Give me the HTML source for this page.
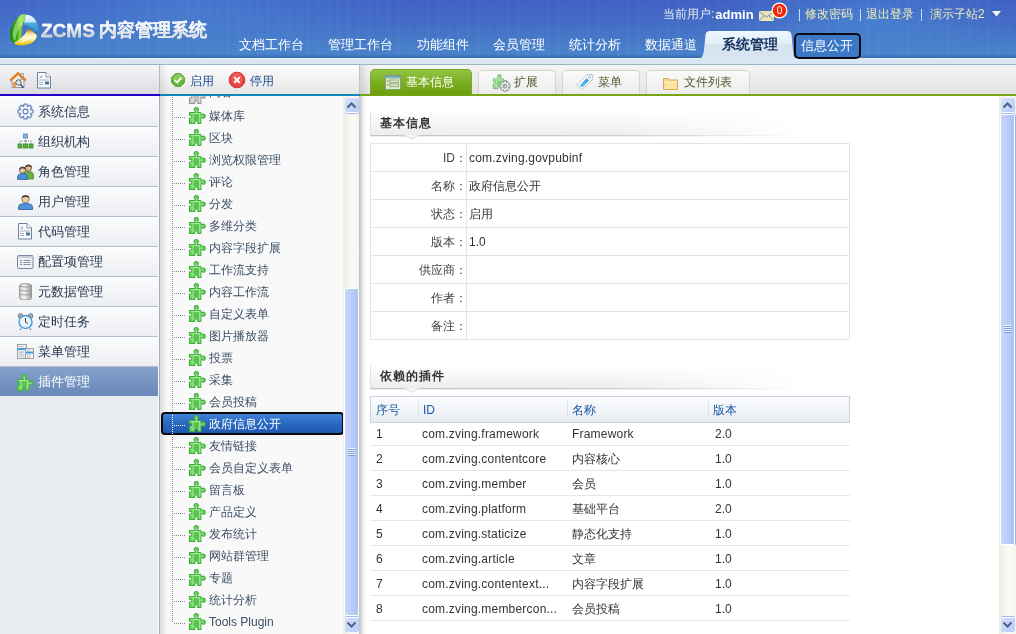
<!DOCTYPE html>
<html><head><meta charset="utf-8">
<style>
*{margin:0;padding:0;box-sizing:border-box}
html,body{will-change:transform;width:1016px;height:634px;overflow:hidden;background:#fff;font-family:"Liberation Sans",sans-serif;font-size:12px;color:#333}
.a{position:absolute}
svg{display:block}
#hdr{left:0;top:0;width:1016px;height:58px;background:linear-gradient(180deg,rgba(0,0,0,0) 93%,rgba(20,50,110,.35) 100%),radial-gradient(ellipse 220px 70px at 190px 12px,rgba(74,140,214,.55),rgba(74,140,214,0)),radial-gradient(ellipse 140px 60px at 870px 20px,rgba(74,144,216,.5),rgba(74,144,216,0)),linear-gradient(180deg,#4060c4 0%,#436cc6 40%,#477ec9 80%,#4a84cb 100%)}
#hdrs{left:0;top:0;width:1016px;height:58px;background:repeating-linear-gradient(90deg,rgba(255,255,255,0) 0px,rgba(255,255,255,0) 7px,rgba(255,255,255,.035) 8px,rgba(255,255,255,0) 10px)}
#hdr2{left:0;top:58px;width:1016px;height:7px;background:linear-gradient(180deg,#e6eef8,#d9e5f2 30%);border-bottom:1px solid #9fb3c7}
.nav{top:37px;font-size:13px;color:#fff;line-height:15px;white-space:nowrap}
.tr{top:7px;font-size:12px;color:#f3ecb5;line-height:14px;white-space:nowrap}
#tb{left:0;top:65px;width:1016px;height:29px;background:linear-gradient(180deg,#f5f5f8,#dcdde1)}
#left{left:0;top:96px;width:159px;height:538px;background:#e9ecf1}
.li{position:absolute;left:0;width:158px;height:30px;background:linear-gradient(180deg,#fbfcfd,#eceef2);border-bottom:1px solid #b4c0d0;font-size:13px;color:#2b3a4f;line-height:29px;padding-left:38px;white-space:nowrap}
.li svg{position:absolute;left:17px;top:6px}
#mid{left:160px;top:96px;width:200px;height:538px;background:#f9f9f9}
.lat{letter-spacing:.2px}
.ti{position:absolute;left:209px;font-size:12px;color:#3c4e66;line-height:14px;white-space:nowrap}
#right{left:360px;top:96px;width:656px;height:538px;background:#fff}
</style></head><body>
<svg width="0" height="0" style="position:absolute">
<defs>
<linearGradient id="pz" x1="0" y1="0" x2="0" y2="1"><stop offset="0" stop-color="#7ad86a"/><stop offset="1" stop-color="#3cae34"/></linearGradient>
<symbol id="puz" viewBox="0 -1 18 18">
<path d="M1.5 4.5H7.5V3.6A2.1 2.1 0 1 1 9.1 3.6V4.5H12.9V7.4H13.4A2 2 0 1 1 13.4 8.9H12.9V15.5H9.8V14.2A1.5 1.5 0 0 0 6.8 14.2V15.5H1.5V10H3.8V7.2H1.5Z" fill="#6ed062" stroke="#40b23a" stroke-width="1.1" stroke-linejoin="round"/>
<path d="M2.6 5.6H11.8V14.4M2.8 11.1H5V14.4M5 6.6V10M8.3 2V5.6M11.8 8.15H14.5" fill="none" stroke="#b8f0b0" stroke-width=".9" opacity=".9"/>
<rect x="5.8" y="6.8" width="5" height="5.2" fill="#54be48" opacity=".75"/>
</symbol>
<symbol id="puzg" viewBox="0 -1 18 18">
<path d="M1.5 4.5H7.5V3.6A2.1 2.1 0 1 1 9.1 3.6V4.5H12.9V7.4H13.4A2 2 0 1 1 13.4 8.9H12.9V15.5H9.8V14.2A1.5 1.5 0 0 0 6.8 14.2V15.5H1.5V10H3.8V7.2H1.5Z" fill="#c8c8c8" stroke="#979797" stroke-width="1.1" stroke-linejoin="round"/>
<path d="M2.6 5.6H11.8V14.4M2.8 11.1H5V14.4M5 6.6V10M8.3 2V5.6M11.8 8.15H14.5" fill="none" stroke="#eee" stroke-width=".9" opacity=".8"/>
<rect x="5.8" y="6.8" width="5" height="5.2" fill="#bbb" opacity=".75"/>
</symbol>
</defs>
</svg>

<!-- HEADER -->
<div id="hdr" class="a"></div>
<div id="hdrs" class="a"></div>
<div id="hdr2" class="a"></div>

<svg class="a" style="left:8px;top:12px" width="32" height="35" viewBox="0 0 32 35">
<defs>
<linearGradient id="lg1" x1="0" y1="0" x2="1" y2="0"><stop offset="0" stop-color="#128a10"/><stop offset=".45" stop-color="#3aa81a"/><stop offset=".6" stop-color="#8ad43a"/><stop offset="1" stop-color="#6cc818"/></linearGradient>
<linearGradient id="lg2" x1="0" y1="0" x2="0" y2="1"><stop offset="0" stop-color="#f0faff"/><stop offset=".35" stop-color="#c8e8f6"/><stop offset=".45" stop-color="#4aaed8"/><stop offset=".8" stop-color="#3598c8"/><stop offset="1" stop-color="#1a5a8c"/></linearGradient>
<linearGradient id="lg3" x1="0" y1="0" x2="0" y2="1"><stop offset="0" stop-color="#b07a08"/><stop offset=".3" stop-color="#f8e8a0"/><stop offset=".55" stop-color="#fffbe0"/><stop offset=".8" stop-color="#f4d030"/><stop offset="1" stop-color="#e8c000"/></linearGradient>
</defs>
<path d="M13.8 2.2L18.2 2.8C17.5 5 16.6 8.3 16.6 8.3C15.5 11 14.3 14.3 14.3 14.3C13.7 17 13.5 21 13.5 24.3L8.3 32C6 31.5 3.5 30 2.5 27.5C1.3 24 1.8 19 3.3 15.5C5 11 8 6 13.8 2.2Z" fill="url(#lg1)"/>
<path d="M13.8 2.2L18.2 2.8C16.5 6 15 10 14.5 14C13 13 11 15 9.5 20C8 24 7.5 27 7 29C4.5 27 4 22 5.5 17C7.5 10 10.5 5 13.8 2.2Z" fill="#c8f0a0" opacity=".55"/>
<path d="M18.2 2.8C20 2.7 23.5 3.5 26 6C28.5 9 30 13 30 16.6C30.2 19 29.6 21 28.7 22C27 19.5 25.5 17.5 24.8 16.6C23 15 20 13.5 16.6 12.7C16 12 16 11 16 11C16.5 8 17.3 5 18.2 2.8Z" fill="url(#lg2)"/>
<path d="M20.4 17.1C22 17.5 23 18 23.7 18.8C26 20.5 28 22 28.7 23.2C29 25 28.2 27 26 29.2C24.5 30.5 22.5 31.6 21 32C18 33 15.5 33.5 13.8 33.4C11 33.3 8.8 33 7.7 32.6L6.1 30.9C8 29.5 10 28.5 11 27.6C12.5 26.5 13.5 25.5 14.3 24.8C15.5 23.5 16.5 22.5 17.7 21C18.5 19.5 19.5 18 20.4 17.1Z" fill="url(#lg3)"/>
<path d="M10 30C15 29.5 20 27 25.5 22.5C24 26 20 29.5 14 31Z" fill="#fff" opacity=".6"/>
</svg>
<div class="a" style="left:41px;top:20px;font-size:19px;font-weight:bold;line-height:22px;color:#eef0f2;background:linear-gradient(180deg,#ffffff 30%,#c8ccd2 70%,#f4f4f4);-webkit-background-clip:text;background-clip:text;-webkit-text-fill-color:transparent;-webkit-text-stroke:.3px rgba(236,240,244,.8)">ZCMS</div>
<div class="a" style="left:99px;top:19px;font-weight:bold;font-size:17.5px;line-height:22px;color:#eef0f2;white-space:nowrap;background:linear-gradient(180deg,#ffffff 35%,#c8d0d8 70%,#eeeeee);-webkit-background-clip:text;background-clip:text;-webkit-text-fill-color:transparent;-webkit-text-stroke:.15px rgba(236,240,244,.7)">内容管理系统</div>

<div class="a nav" style="left:239px">文档工作台</div>
<div class="a nav" style="left:328px">管理工作台</div>
<div class="a nav" style="left:417px">功能组件</div>
<div class="a nav" style="left:493px">会员管理</div>
<div class="a nav" style="left:569px">统计分析</div>
<div class="a nav" style="left:645px">数据通道</div>
<svg class="a" style="left:697px;top:30px" width="100" height="29" viewBox="0 0 100 29">
<defs><linearGradient id="act" x1="0" y1="0" x2="0" y2="1"><stop offset="0" stop-color="#eef7fd"/><stop offset=".45" stop-color="#e2eff9"/><stop offset=".5" stop-color="#d8e5f1"/><stop offset="1" stop-color="#d6e3f0"/></linearGradient></defs>
<path d="M2 28.5C5 28 6 26 7 20L8.5 5C9 2 10 1 13 1H90C93 1 94 2 94.5 5L96 20C97 26 97 28 100 28.5Z" fill="url(#act)"/>
</svg>
<div class="a" style="left:722px;top:37px;font-size:13.5px;font-weight:bold;line-height:15px;color:#15335e;white-space:nowrap">系统管理</div>
<div class="a" style="left:794px;top:33px;width:67px;height:26px;border:2px solid #0a0a14;border-radius:5px;background:#3b78c6"></div>
<div class="a nav" style="left:801px;top:38px">信息公开</div>

<div class="a tr" style="left:663px;color:#e4eaf2">当前用户:<b style="color:#fff;font-size:13px;margin-left:1px;position:relative;top:1px">admin</b></div>
<svg class="a" style="left:759px;top:11px" width="15" height="10" viewBox="0 0 15 10"><rect x="0" y="0" width="15" height="10" fill="#ece6b4"/><path d="M0 .5L7.5 6L15 .5M0 9.5L5.5 4.5M15 9.5L9.5 4.5" fill="none" stroke="#6a88b8" stroke-width=".9"/></svg>
<svg class="a" style="left:770px;top:2px" width="19" height="17" viewBox="0 0 19 17"><circle cx="9.5" cy="8.5" r="7.4" fill="#f02c0c" stroke="#fff6f0" stroke-width="1.3"/><text x="9.5" y="12" font-size="10" fill="#fff" text-anchor="middle" font-family="Liberation Sans">0</text></svg>
<div class="a" style="left:799px;top:9px;width:1px;height:12px;background:#d0dcf0"></div>
<div class="a tr" style="left:805px">修改密码</div>
<div class="a" style="left:860px;top:9px;width:1px;height:12px;background:#d0dcf0"></div>
<div class="a tr" style="left:866px">退出登录</div>
<div class="a" style="left:921px;top:9px;width:1px;height:12px;background:#d0dcf0"></div>
<div class="a tr" style="left:930px;font-size:12px;top:7px">演示子站2</div>
<svg class="a" style="left:992px;top:11px" width="9" height="6" viewBox="0 0 9 6"><path d="M0 0H9L4.5 5.5Z" fill="#f4f4f0"/></svg>

<!-- TOOLBAR -->
<div id="tb" class="a"></div>
<div class="a" style="left:159px;top:65px;width:1px;height:29px;background:#b4b8c0"></div>
<div class="a" style="left:160px;top:65px;width:200px;height:29px;background:linear-gradient(180deg,#fdfdfd,#e6e6e6)"></div>
<div class="a" style="left:160px;top:65px;width:8px;height:29px;background:linear-gradient(90deg,rgba(0,0,0,.08),rgba(0,0,0,0))"></div>
<div class="a" style="left:359px;top:65px;width:1px;height:29px;background:#c4c4c4"></div>
<div class="a" style="left:360px;top:65px;width:656px;height:29px;background:linear-gradient(180deg,#f4f4f4,#e4e4e4)"></div>
<div class="a" style="left:360px;top:65px;width:9px;height:29px;background:linear-gradient(90deg,rgba(0,0,0,.1),rgba(0,0,0,0))"></div>
<div class="a" style="left:0;top:94px;width:160px;height:2px;background:#2600c8"></div>
<div class="a" style="left:160px;top:94px;width:200px;height:2px;background:#0f88b6"></div>
<div class="a" style="left:360px;top:94px;width:656px;height:2px;background:#76a614"></div>

<!-- home icon -->
<svg class="a" style="left:9px;top:72px" width="18" height="17" viewBox="0 0 18 17">
<rect x="12" y="1.5" width="2.5" height="6" fill="#eef" stroke="#8a9ab0" stroke-width=".8"/>
<path d="M3 8V15.5H15V8" fill="#f4f0ea" stroke="#8a9ab0" stroke-width="1"/>
<path d="M1.2 8.6L9 1.3L16.8 8.6" fill="none" stroke="#e07d18" stroke-width="2.4" stroke-linejoin="round"/>
<rect x="4.2" y="10" width="2.6" height="5.5" fill="#f09030"/>
<circle cx="9.5" cy="10.5" r="2.7" fill="#d8eaf2" stroke="#555" stroke-width="1"/>
<path d="M11.5 12.5L14.5 15.8" stroke="#444" stroke-width="1.3"/>
</svg>
<!-- doc icon -->
<svg class="a" style="left:36px;top:72px" width="16" height="17" viewBox="0 0 16 17">
<path d="M1.5 .5H10L14.5 5V16H1.5Z" fill="#f8fafc" stroke="#6e7f96" stroke-width="1"/>
<path d="M10 .5V5H14.5" fill="#fff" stroke="#6e7f96" stroke-width=".8"/>
<path d="M3 6L6 2.5V6Z" fill="#b8b0e8"/>
<path d="M3 8H13M3 10.5H7M3 12.5H7" stroke="#9aaac0" stroke-width=".9"/>
<rect x="9" y="9.5" width="4" height="3" fill="#4a7890"/>
</svg>

<!-- enable / disable -->
<svg class="a" style="left:171px;top:73px" width="14" height="14" viewBox="0 0 16 16">
<path d="M5 .8H11L15.2 5V11L11 15.2H5L.8 11V5Z" fill="#6cba3c" stroke="#4e8a30" stroke-width="1.1"/>
<path d="M5 1.5H11L14.5 5V8H1.5V5Z" fill="#9ad870" opacity=".55"/>
<path d="M4.3 8.2L7 10.8L11.8 5.4" fill="none" stroke="#fff" stroke-width="2.2"/>
</svg>
<div class="a" style="left:190px;top:74px;font-size:12px;line-height:14px;color:#174a8c;white-space:nowrap">启用</div>
<svg class="a" style="left:228px;top:71px" width="18" height="18" viewBox="0 0 18 18">
<circle cx="9" cy="9" r="7.8" fill="#ea4444" stroke="#c83030" stroke-width="1"/>
<circle cx="9" cy="7" r="5.5" fill="#ff8080" opacity=".35"/>
<path d="M6.2 6.2L11.8 11.8M11.8 6.2L6.2 11.8" stroke="#fff" stroke-width="1.9"/>
</svg>
<div class="a" style="left:250px;top:74px;font-size:12px;line-height:14px;color:#174a8c;white-space:nowrap">停用</div>

<!-- tabs -->
<div class="a" style="left:370px;top:69px;width:102px;height:26px;border-radius:5px 5px 0 0;background:linear-gradient(180deg,#92c444,#78aa1c 60%,#6c9e0e);border:1px solid #78aa20;border-bottom:0"></div>
<svg class="a" style="left:385px;top:75px" width="16" height="15" viewBox="0 0 16 15">
<rect x=".5" y=".5" width="15" height="14" fill="#e2eec4" stroke="#7e9e86" stroke-width="1"/>
<rect x="1" y="1" width="14" height="2.6" fill="#8cc0b4"/>
<rect x="1" y="1" width="14" height=".8" fill="#5e9ec0"/>
<rect x="4.8" y="5" width="8.6" height="2.6" fill="none" stroke="#94aa8c" stroke-width="1"/>
<rect x="4.8" y="9" width="8.6" height="2.6" fill="none" stroke="#94aa8c" stroke-width="1"/>
<rect x="2" y="5" width="1.6" height="1.6" fill="#94aa8c"/><rect x="2" y="9" width="1.6" height="1.6" fill="#94aa8c"/>
</svg>
<div class="a" style="left:406px;top:75px;font-size:12px;line-height:14px;color:#fff;white-space:nowrap">基本信息</div>

<div class="a" style="left:478px;top:70px;width:78px;height:24px;border-radius:5px 5px 0 0;background:linear-gradient(180deg,#fafafa,#ececec);border:1px solid #d2d9bd;border-bottom:0"></div>
<svg class="a" style="left:492px;top:73px" width="20" height="20" viewBox="0 0 20 20">
<use href="#puz" x="0" y="1" width="16" height="16" opacity=".72"/>
<path d="M18.17 12.04 L18.17 14.36 L16.51 14.90 L16.68 14.48 L17.48 16.04 L15.84 17.68 L14.28 16.88 L14.70 16.71 L14.16 18.37 L11.84 18.37 L11.30 16.71 L11.72 16.88 L10.16 17.68 L8.52 16.04 L9.32 14.48 L9.49 14.90 L7.83 14.36 L7.83 12.04 L9.49 11.50 L9.32 11.92 L8.52 10.36 L10.16 8.72 L11.72 9.52 L11.30 9.69 L11.84 8.03 L14.16 8.03 L14.70 9.69 L14.28 9.52 L15.84 8.72 L17.48 10.36 L16.68 11.92 L16.51 11.50Z" fill="#ececec" stroke="#8c8c8c" stroke-width=".9"/>
<circle cx="13" cy="13.2" r="1.9" fill="#fff" stroke="#777" stroke-width=".9"/>
<circle cx="12.6" cy="13.2" r=".9" fill="#5cc050"/>
</svg>
<div class="a" style="left:514px;top:75px;font-size:12px;line-height:14px;color:#4e5a30;white-space:nowrap">扩展</div>

<div class="a" style="left:562px;top:70px;width:78px;height:24px;border-radius:5px 5px 0 0;background:linear-gradient(180deg,#fafafa,#ececec);border:1px solid #d2d9bd;border-bottom:0"></div>
<svg class="a" style="left:570px;top:70px" width="30" height="24" viewBox="0 0 30 24">
<defs><linearGradient id="tagb" x1="0" y1="1" x2="1" y2="0"><stop offset="0" stop-color="#5cc8f4"/><stop offset="1" stop-color="#3a98d8"/></linearGradient></defs>
<path d="M7.2 14.8L17.2 4.5H22.6V9.6L11.8 19.6Z" fill="#fbfcfd" stroke="#98a6b4" stroke-width="1" stroke-dasharray="1.2 .8" stroke-linejoin="round"/>
<path d="M9.6 15.4L16.6 8.2L19.2 10.4L12.2 17.6Z" fill="url(#tagb)"/>
<circle cx="19.5" cy="7.4" r="1.3" fill="#fff" stroke="#a0aab4" stroke-width=".8"/>
</svg>
<div class="a" style="left:598px;top:75px;font-size:12px;line-height:14px;color:#4e5a30;white-space:nowrap">菜单</div>

<div class="a" style="left:646px;top:70px;width:104px;height:24px;border-radius:5px 5px 0 0;background:linear-gradient(180deg,#fafafa,#ececec);border:1px solid #d2d9bd;border-bottom:0"></div>
<svg class="a" style="left:663px;top:77px" width="15" height="13" viewBox="0 0 15 13">
<path d="M.5 1.5H5.5L7 3H14.5V12.5H.5Z" fill="#f4d890" stroke="#dca860" stroke-width="1"/>
<path d="M1.2 5H13.8V12H1.2Z" fill="#fae69a"/>
<path d="M1.2 5H13.8" stroke="#fff6d0" stroke-width="1"/>
</svg>
<div class="a" style="left:684px;top:75px;font-size:12px;line-height:14px;color:#4e5a30;white-space:nowrap">文件列表</div>

<!-- LEFT NAV -->
<div id="left" class="a"></div>
<div class="a" style="left:0;top:96px;width:158px;height:1px;background:#fbfcfd"></div>
<div class="a" style="left:158px;top:96px;width:1px;height:538px;background:#f6f8fc"></div><div class="a" style="left:159px;top:96px;width:1px;height:538px;background:#a6aeba"></div>
<div class="li" style="top:97px"><svg width="17" height="17" viewBox="0 0 17 17"><path d="M6.99 1.05 L10.01 1.05 L10.40 3.45 L10.73 3.58 L12.70 2.17 L14.83 4.30 L13.42 6.27 L13.55 6.60 L15.95 6.99 L15.95 10.01 L13.55 10.40 L13.42 10.73 L14.83 12.70 L12.70 14.83 L10.73 13.42 L10.40 13.55 L10.01 15.95 L6.99 15.95 L6.60 13.55 L6.27 13.42 L4.30 14.83 L2.17 12.70 L3.58 10.73 L3.45 10.40 L1.05 10.01 L1.05 6.99 L3.45 6.60 L3.58 6.27 L2.17 4.30 L4.30 2.17 L6.27 3.58 L6.60 3.45Z" fill="#f2f6fb" stroke="#5f84b8" stroke-width="1.2" stroke-linejoin="round"/><circle cx="8.5" cy="8.5" r="2.4" fill="#fff" stroke="#5f84b8" stroke-width="1.2"/></svg>系统信息</div>
<div class="li" style="top:127px"><svg width="17" height="17" viewBox="0 0 17 17"><rect x="6.5" y="1" width="4" height="4" fill="#8ab4e8" stroke="#5a84b8" stroke-width=".8"/><path d="M8.5 5V8M3 8H14M3 8V11M8.5 8V11M14 8V11" stroke="#888" stroke-width="1" fill="none" stroke-dasharray="1 1"/><rect x="1" y="11" width="4" height="4" fill="#5cb040" stroke="#3a8a28" stroke-width=".8"/><rect x="6.5" y="11" width="4" height="4" fill="#5cb040" stroke="#3a8a28" stroke-width=".8"/><rect x="12" y="11" width="4" height="4" fill="#5cb040" stroke="#3a8a28" stroke-width=".8"/></svg>组织机构</div>
<div class="li" style="top:157px"><svg width="17" height="17" viewBox="0 0 17 17"><circle cx="11.5" cy="5" r="3.2" fill="#e8b890" stroke="#333" stroke-width=".6"/><path d="M8.3 4.2C8.5 1.5 14.5 1.2 14.8 4.5L14 4C12.5 3 10 3 9 4.2Z" fill="#2a2a2a"/><path d="M6.5 16V12C6.5 9.5 9 8.5 11.5 8.5C14 8.5 16.5 9.5 16.5 12V16Z" fill="#6ab04a" stroke="#3a7a2a" stroke-width=".7"/><circle cx="5.5" cy="7" r="3.2" fill="#f0c8a0" stroke="#333" stroke-width=".6"/><path d="M2.3 6.4C2.5 3.5 8.5 3.3 8.8 6.5L8 6C6.5 5 4 5 3 6.2Z" fill="#1a1a1a"/><path d="M.5 16.5V14C.5 11.5 3 10.5 5.5 10.5C8 10.5 10.5 11.5 10.5 14V16.5Z" fill="#4a90d8" stroke="#2a5a98" stroke-width=".7"/></svg>角色管理</div>
<div class="li" style="top:187px"><svg width="17" height="17" viewBox="0 0 17 17"><circle cx="8.5" cy="6" r="3.8" fill="#f0c8a0" stroke="#555" stroke-width=".6"/><path d="M4.6 5.6C4.5 1.5 12.5 1.2 12.5 5.6L11.5 4.6C10 3.6 7 3.6 5.6 4.6Z" fill="#222"/><path d="M1.5 16.5V14C1.5 11.5 4.5 10.5 8.5 10.5C12.5 10.5 15.5 11.5 15.5 14V16.5Z" fill="#4c94dc" stroke="#2a5a98" stroke-width=".8"/></svg>用户管理</div>
<div class="li" style="top:217px"><svg width="16" height="17" viewBox="0 0 16 17"><path d="M1.5 .5H10L14.5 5V16H1.5Z" fill="#f8fafc" stroke="#6e7f96" stroke-width="1"/><path d="M10 .5V5H14.5" fill="#fff" stroke="#6e7f96" stroke-width=".8"/><path d="M3 6L6 2.5V6Z" fill="#b8b0e8"/><path d="M3 8H13M3 10.5H7M3 12.5H7" stroke="#9aaac0" stroke-width=".9"/><rect x="9" y="9.5" width="4" height="3" fill="#4a7890"/></svg>代码管理</div>
<div class="li" style="top:247px"><svg width="17" height="17" viewBox="0 0 17 17"><rect x=".5" y="2.5" width="15.5" height="13" rx="1" fill="#f0f2f6" stroke="#7a8aa0" stroke-width="1"/><rect x="1" y="3" width="14.5" height="2" fill="#c8d0dc"/><path d="M3 7.5H5M3 9.5H5M3 11.5H5M6.5 7.5H13.5M6.5 9.5H13.5M6.5 11.5H13.5" stroke="#8a96a8" stroke-width="1"/></svg>配置项管理</div>
<div class="li" style="top:277px"><svg width="17" height="17" viewBox="0 0 17 17"><defs><linearGradient id="dbg" x1="0" x2="1"><stop offset="0" stop-color="#c8c8c8"/><stop offset=".4" stop-color="#f4f4f4"/><stop offset="1" stop-color="#9a9a9a"/></linearGradient></defs><path d="M2.5 2.5C2.5 0 14.5 0 14.5 2.5V15C14.5 17.5 2.5 17.5 2.5 15Z" fill="url(#dbg)" stroke="#8a8a8a" stroke-width=".8"/><path d="M2.5 6.5C2.5 8.5 14.5 8.5 14.5 6.5M2.5 10.5C2.5 12.5 14.5 12.5 14.5 10.5M2.5 2.5C2.5 4.5 14.5 4.5 14.5 2.5" fill="none" stroke="#8a8a8a" stroke-width=".8"/></svg>元数据管理</div>
<div class="li" style="top:307px"><svg width="17" height="17" viewBox="0 0 17 17"><circle cx="3.5" cy="3" r="2.5" fill="#a0a8b4" stroke="#6a7280" stroke-width=".6"/><circle cx="13.5" cy="3" r="2.5" fill="#a0a8b4" stroke="#6a7280" stroke-width=".6"/><circle cx="8.5" cy="9" r="6.5" fill="#eaf4fc" stroke="#4a9ad8" stroke-width="1.4"/><path d="M8.5 5V9.2L11 10.5" fill="none" stroke="#444" stroke-width="1"/><path d="M4 15.5L3 17M13 15.5L14 17" stroke="#6a7280" stroke-width="1.2"/></svg>定时任务</div>
<div class="li" style="top:337px"><svg width="17" height="17" viewBox="0 0 17 17"><rect x=".5" y="1.5" width="9" height="14" fill="#eceef0" stroke="#8a8e94" stroke-width=".8"/><rect x="1" y="5" width="8" height="2" fill="#3a9ae0"/><path d="M2 3.5H6M2 9H7M2 11H6M2 13H7" stroke="#a0a4aa" stroke-width=".7"/><rect x="8.5" y="5.5" width="8" height="10" fill="#f2f4f6" stroke="#8a8e94" stroke-width=".8"/><rect x="9" y="8.5" width="7" height="2" fill="#3a9ae0"/><path d="M10 7H13M10 12H14M10 14H13" stroke="#a0a4aa" stroke-width=".7"/></svg>菜单管理</div>
<div class="li" style="top:367px;height:29px;line-height:30px;background:linear-gradient(180deg,#84a2cc,#6a88b8);border-bottom:0;color:#fff"><svg style="left:16px;top:7px" width="18" height="18" viewBox="0 0 18 18"><use href="#puz" width="18" height="18"/></svg>插件管理</div>

<!-- TREE -->
<div id="mid" class="a"></div>
<div class="a" style="left:160px;top:96px;width:7px;height:538px;background:linear-gradient(90deg,#dcdcdc,rgba(249,249,249,0))"></div>
<div class="a" style="left:160px;top:96px;width:184px;height:538px;overflow:hidden">
<div class="a" style="left:12px;top:-9px;width:1px;height:535px;background:repeating-linear-gradient(180deg,#8a8a8a 0,#8a8a8a 1px,transparent 1px,transparent 2px)"></div>
<svg class="a" style="left:28px;top:-9px" width="18" height="18" viewBox="0 0 18 18"><use href="#puzg" width="18" height="18"/></svg>
<div class="a" style="left:49px;top:-11px;font-size:12px;line-height:14px;color:#3c4e66">内容</div>
<div class="a" style="left:14px;top:21px;width:11px;height:1px;background:repeating-linear-gradient(90deg,#8a8a8a 0,#8a8a8a 1px,transparent 1px,transparent 2px)"></div>
<svg class="a" style="left:28px;top:11px" width="18" height="18" viewBox="0 0 18 18"><use href="#puz" width="18" height="18"/></svg>
<div class="a" style="left:49px;top:13px;font-size:12px;line-height:14px;color:#3c4e66;white-space:nowrap">媒体库</div>
<div class="a" style="left:14px;top:43px;width:11px;height:1px;background:repeating-linear-gradient(90deg,#8a8a8a 0,#8a8a8a 1px,transparent 1px,transparent 2px)"></div>
<svg class="a" style="left:28px;top:33px" width="18" height="18" viewBox="0 0 18 18"><use href="#puz" width="18" height="18"/></svg>
<div class="a" style="left:49px;top:35px;font-size:12px;line-height:14px;color:#3c4e66;white-space:nowrap">区块</div>
<div class="a" style="left:14px;top:65px;width:11px;height:1px;background:repeating-linear-gradient(90deg,#8a8a8a 0,#8a8a8a 1px,transparent 1px,transparent 2px)"></div>
<svg class="a" style="left:28px;top:55px" width="18" height="18" viewBox="0 0 18 18"><use href="#puz" width="18" height="18"/></svg>
<div class="a" style="left:49px;top:57px;font-size:12px;line-height:14px;color:#3c4e66;white-space:nowrap">浏览权限管理</div>
<div class="a" style="left:14px;top:87px;width:11px;height:1px;background:repeating-linear-gradient(90deg,#8a8a8a 0,#8a8a8a 1px,transparent 1px,transparent 2px)"></div>
<svg class="a" style="left:28px;top:77px" width="18" height="18" viewBox="0 0 18 18"><use href="#puz" width="18" height="18"/></svg>
<div class="a" style="left:49px;top:79px;font-size:12px;line-height:14px;color:#3c4e66;white-space:nowrap">评论</div>
<div class="a" style="left:14px;top:109px;width:11px;height:1px;background:repeating-linear-gradient(90deg,#8a8a8a 0,#8a8a8a 1px,transparent 1px,transparent 2px)"></div>
<svg class="a" style="left:28px;top:99px" width="18" height="18" viewBox="0 0 18 18"><use href="#puz" width="18" height="18"/></svg>
<div class="a" style="left:49px;top:101px;font-size:12px;line-height:14px;color:#3c4e66;white-space:nowrap">分发</div>
<div class="a" style="left:14px;top:131px;width:11px;height:1px;background:repeating-linear-gradient(90deg,#8a8a8a 0,#8a8a8a 1px,transparent 1px,transparent 2px)"></div>
<svg class="a" style="left:28px;top:121px" width="18" height="18" viewBox="0 0 18 18"><use href="#puz" width="18" height="18"/></svg>
<div class="a" style="left:49px;top:123px;font-size:12px;line-height:14px;color:#3c4e66;white-space:nowrap">多维分类</div>
<div class="a" style="left:14px;top:153px;width:11px;height:1px;background:repeating-linear-gradient(90deg,#8a8a8a 0,#8a8a8a 1px,transparent 1px,transparent 2px)"></div>
<svg class="a" style="left:28px;top:143px" width="18" height="18" viewBox="0 0 18 18"><use href="#puz" width="18" height="18"/></svg>
<div class="a" style="left:49px;top:145px;font-size:12px;line-height:14px;color:#3c4e66;white-space:nowrap">内容字段扩展</div>
<div class="a" style="left:14px;top:175px;width:11px;height:1px;background:repeating-linear-gradient(90deg,#8a8a8a 0,#8a8a8a 1px,transparent 1px,transparent 2px)"></div>
<svg class="a" style="left:28px;top:165px" width="18" height="18" viewBox="0 0 18 18"><use href="#puz" width="18" height="18"/></svg>
<div class="a" style="left:49px;top:167px;font-size:12px;line-height:14px;color:#3c4e66;white-space:nowrap">工作流支持</div>
<div class="a" style="left:14px;top:197px;width:11px;height:1px;background:repeating-linear-gradient(90deg,#8a8a8a 0,#8a8a8a 1px,transparent 1px,transparent 2px)"></div>
<svg class="a" style="left:28px;top:187px" width="18" height="18" viewBox="0 0 18 18"><use href="#puz" width="18" height="18"/></svg>
<div class="a" style="left:49px;top:189px;font-size:12px;line-height:14px;color:#3c4e66;white-space:nowrap">内容工作流</div>
<div class="a" style="left:14px;top:219px;width:11px;height:1px;background:repeating-linear-gradient(90deg,#8a8a8a 0,#8a8a8a 1px,transparent 1px,transparent 2px)"></div>
<svg class="a" style="left:28px;top:209px" width="18" height="18" viewBox="0 0 18 18"><use href="#puz" width="18" height="18"/></svg>
<div class="a" style="left:49px;top:211px;font-size:12px;line-height:14px;color:#3c4e66;white-space:nowrap">自定义表单</div>
<div class="a" style="left:14px;top:241px;width:11px;height:1px;background:repeating-linear-gradient(90deg,#8a8a8a 0,#8a8a8a 1px,transparent 1px,transparent 2px)"></div>
<svg class="a" style="left:28px;top:231px" width="18" height="18" viewBox="0 0 18 18"><use href="#puz" width="18" height="18"/></svg>
<div class="a" style="left:49px;top:233px;font-size:12px;line-height:14px;color:#3c4e66;white-space:nowrap">图片播放器</div>
<div class="a" style="left:14px;top:263px;width:11px;height:1px;background:repeating-linear-gradient(90deg,#8a8a8a 0,#8a8a8a 1px,transparent 1px,transparent 2px)"></div>
<svg class="a" style="left:28px;top:253px" width="18" height="18" viewBox="0 0 18 18"><use href="#puz" width="18" height="18"/></svg>
<div class="a" style="left:49px;top:255px;font-size:12px;line-height:14px;color:#3c4e66;white-space:nowrap">投票</div>
<div class="a" style="left:14px;top:285px;width:11px;height:1px;background:repeating-linear-gradient(90deg,#8a8a8a 0,#8a8a8a 1px,transparent 1px,transparent 2px)"></div>
<svg class="a" style="left:28px;top:275px" width="18" height="18" viewBox="0 0 18 18"><use href="#puz" width="18" height="18"/></svg>
<div class="a" style="left:49px;top:277px;font-size:12px;line-height:14px;color:#3c4e66;white-space:nowrap">采集</div>
<div class="a" style="left:14px;top:307px;width:11px;height:1px;background:repeating-linear-gradient(90deg,#8a8a8a 0,#8a8a8a 1px,transparent 1px,transparent 2px)"></div>
<svg class="a" style="left:28px;top:297px" width="18" height="18" viewBox="0 0 18 18"><use href="#puz" width="18" height="18"/></svg>
<div class="a" style="left:49px;top:299px;font-size:12px;line-height:14px;color:#3c4e66;white-space:nowrap">会员投稿</div>
<div class="a" style="left:14px;top:329px;width:11px;height:1px;background:repeating-linear-gradient(90deg,#8a8a8a 0,#8a8a8a 1px,transparent 1px,transparent 2px)"></div>
<div class="a" style="left:1px;top:316px;width:183px;height:23px;border:2px solid #0a0a10;border-radius:4px;background:linear-gradient(180deg,#3f82d8,#2a68c0 50%,#1f5ab0)"></div>
<div class="a" style="left:14px;top:329px;width:11px;height:1px;background:repeating-linear-gradient(90deg,#fff 0,#fff 1px,transparent 1px,transparent 2px)"></div>
<div class="a" style="left:12px;top:319px;width:1px;height:21px;background:repeating-linear-gradient(180deg,#fff 0,#fff 1px,transparent 1px,transparent 2px)"></div>
<svg class="a" style="left:28px;top:319px" width="18" height="18" viewBox="0 0 18 18"><use href="#puz" width="18" height="18"/></svg>
<div class="a" style="left:49px;top:321px;font-size:12px;line-height:14px;color:#fff;white-space:nowrap">政府信息公开</div>
<div class="a" style="left:14px;top:351px;width:11px;height:1px;background:repeating-linear-gradient(90deg,#8a8a8a 0,#8a8a8a 1px,transparent 1px,transparent 2px)"></div>
<svg class="a" style="left:28px;top:341px" width="18" height="18" viewBox="0 0 18 18"><use href="#puz" width="18" height="18"/></svg>
<div class="a" style="left:49px;top:343px;font-size:12px;line-height:14px;color:#3c4e66;white-space:nowrap">友情链接</div>
<div class="a" style="left:14px;top:373px;width:11px;height:1px;background:repeating-linear-gradient(90deg,#8a8a8a 0,#8a8a8a 1px,transparent 1px,transparent 2px)"></div>
<svg class="a" style="left:28px;top:363px" width="18" height="18" viewBox="0 0 18 18"><use href="#puz" width="18" height="18"/></svg>
<div class="a" style="left:49px;top:365px;font-size:12px;line-height:14px;color:#3c4e66;white-space:nowrap">会员自定义表单</div>
<div class="a" style="left:14px;top:395px;width:11px;height:1px;background:repeating-linear-gradient(90deg,#8a8a8a 0,#8a8a8a 1px,transparent 1px,transparent 2px)"></div>
<svg class="a" style="left:28px;top:385px" width="18" height="18" viewBox="0 0 18 18"><use href="#puz" width="18" height="18"/></svg>
<div class="a" style="left:49px;top:387px;font-size:12px;line-height:14px;color:#3c4e66;white-space:nowrap">留言板</div>
<div class="a" style="left:14px;top:417px;width:11px;height:1px;background:repeating-linear-gradient(90deg,#8a8a8a 0,#8a8a8a 1px,transparent 1px,transparent 2px)"></div>
<svg class="a" style="left:28px;top:407px" width="18" height="18" viewBox="0 0 18 18"><use href="#puz" width="18" height="18"/></svg>
<div class="a" style="left:49px;top:409px;font-size:12px;line-height:14px;color:#3c4e66;white-space:nowrap">产品定义</div>
<div class="a" style="left:14px;top:439px;width:11px;height:1px;background:repeating-linear-gradient(90deg,#8a8a8a 0,#8a8a8a 1px,transparent 1px,transparent 2px)"></div>
<svg class="a" style="left:28px;top:429px" width="18" height="18" viewBox="0 0 18 18"><use href="#puz" width="18" height="18"/></svg>
<div class="a" style="left:49px;top:431px;font-size:12px;line-height:14px;color:#3c4e66;white-space:nowrap">发布统计</div>
<div class="a" style="left:14px;top:461px;width:11px;height:1px;background:repeating-linear-gradient(90deg,#8a8a8a 0,#8a8a8a 1px,transparent 1px,transparent 2px)"></div>
<svg class="a" style="left:28px;top:451px" width="18" height="18" viewBox="0 0 18 18"><use href="#puz" width="18" height="18"/></svg>
<div class="a" style="left:49px;top:453px;font-size:12px;line-height:14px;color:#3c4e66;white-space:nowrap">网站群管理</div>
<div class="a" style="left:14px;top:483px;width:11px;height:1px;background:repeating-linear-gradient(90deg,#8a8a8a 0,#8a8a8a 1px,transparent 1px,transparent 2px)"></div>
<svg class="a" style="left:28px;top:473px" width="18" height="18" viewBox="0 0 18 18"><use href="#puz" width="18" height="18"/></svg>
<div class="a" style="left:49px;top:475px;font-size:12px;line-height:14px;color:#3c4e66;white-space:nowrap">专题</div>
<div class="a" style="left:14px;top:505px;width:11px;height:1px;background:repeating-linear-gradient(90deg,#8a8a8a 0,#8a8a8a 1px,transparent 1px,transparent 2px)"></div>
<svg class="a" style="left:28px;top:495px" width="18" height="18" viewBox="0 0 18 18"><use href="#puz" width="18" height="18"/></svg>
<div class="a" style="left:49px;top:497px;font-size:12px;line-height:14px;color:#3c4e66;white-space:nowrap">统计分析</div>
<div class="a" style="left:14px;top:527px;width:11px;height:1px;background:repeating-linear-gradient(90deg,#8a8a8a 0,#8a8a8a 1px,transparent 1px,transparent 2px)"></div>
<svg class="a" style="left:28px;top:517px" width="18" height="18" viewBox="0 0 18 18"><use href="#puz" width="18" height="18"/></svg>
<div class="a" style="left:49px;top:519px;font-size:12px;line-height:14px;color:#3c4e66;white-space:nowrap">Tools Plugin</div>
</div>
<div class="a" style="left:343px;top:96px;width:17px;height:538px;background:linear-gradient(90deg,#eeede6,#fbfbf6 60%,#f4f3ee)"></div>
<div class="a" style="left:345px;top:98px;width:14px;height:14px;border-radius:2px;background:linear-gradient(135deg,#d4e0fc,#b8ccfa);box-shadow:0 1px 0 #fff,0 2px 0 #a4bce8"></div>
<svg class="a" style="left:346px;top:101px" width="11" height="9" viewBox="0 0 11 9"><path d="M1.5 6.5L5.5 2.5L9.5 6.5" fill="none" stroke="#4d6185" stroke-width="2"/></svg>
<div class="a" style="left:344px;top:288px;width:15px;height:328px;border-radius:2px;background:linear-gradient(90deg,#c8d6fc,#b8ccf8 60%,#a8c0f4);border:1px solid #fff;box-shadow:1px 0 0 #9ab4e8"></div>
<svg class="a" style="left:347px;top:448px" width="9" height="8" viewBox="0 0 9 8"><path d="M1 .5H8M1 2.5H8M1 4.5H8M1 6.5H8" stroke="#f4f6ff" stroke-width="1"/><path d="M1 1.5H8M1 3.5H8M1 5.5H8M1 7.5H8" stroke="#7e9ad6" stroke-width="1"/></svg>
<div class="a" style="left:345px;top:618px;width:14px;height:14px;border-radius:2px;background:linear-gradient(135deg,#d4e0fc,#b8ccfa);box-shadow:0 -1px 0 #fff,0 -2px 0 #a4bce8"></div>
<svg class="a" style="left:346px;top:620px" width="11" height="9" viewBox="0 0 11 9"><path d="M1.5 2.5L5.5 6.5L9.5 2.5" fill="none" stroke="#4d6185" stroke-width="2"/></svg>
<div class="a" style="left:359px;top:96px;width:1px;height:538px;background:#c8c8c8"></div>

<!-- RIGHT CONTENT -->
<div id="right" class="a"></div>
<div class="a" style="left:360px;top:96px;width:6px;height:538px;background:linear-gradient(90deg,#c8c8c8,#e8e8e8 40%,rgba(255,255,255,0))"></div>
<!-- section 1 header -->
<div class="a" style="left:370px;top:111px;width:430px;height:25px;background:linear-gradient(90deg,rgba(255,255,255,0) 0%,rgba(255,255,255,0) 55%,#fff 100%),linear-gradient(180deg,#ffffff,#ececec);border-left:1px solid #e2e2e2;border-radius:3px 0 0 0"></div>
<div class="a" style="left:370px;top:135px;width:430px;height:1px;background:linear-gradient(90deg,#c4c4c4,#cccccc 55%,rgba(255,255,255,0))"></div>
<div class="a" style="left:370px;top:136px;width:430px;height:1px;background:linear-gradient(90deg,#ececec,#f0f0f0 55%,rgba(255,255,255,0))"></div>
<svg class="a" style="left:403px;top:135px" width="17" height="6" viewBox="0 0 17 6"><path d="M0 0L8.5 5L17 0Z" fill="#e4e4e4"/><path d="M2.5 0L8.5 3.6L14.5 0Z" fill="#f4f4f4"/></svg>
<div class="a" style="left:380px;top:116px;font-size:12px;font-weight:bold;line-height:14px;color:#333;letter-spacing:1px">基本信息</div>
<div class="a" style="left:370px;top:143px;width:480px;height:197px;border:1px solid #e4e4e4"></div>
<div class="a" style="left:466px;top:143px;width:1px;height:197px;background:#e4e4e4"></div>
<div class="a" style="left:373px;top:151px;width:94px;text-align:right;font-size:12px;line-height:14px;color:#444;white-space:nowrap">ID：</div>
<div class="a" style="left:469px;top:151px;font-size:12px;line-height:14px;color:#333;white-space:nowrap;letter-spacing:.2px">com.zving.govpubinf</div>
<div class="a" style="left:370px;top:171px;width:480px;height:1px;background:#e4e4e4"></div>
<div class="a" style="left:373px;top:179px;width:94px;text-align:right;font-size:12px;line-height:14px;color:#444;white-space:nowrap">名称：</div>
<div class="a" style="left:469px;top:179px;font-size:12px;line-height:14px;color:#333;white-space:nowrap">政府信息公开</div>
<div class="a" style="left:370px;top:199px;width:480px;height:1px;background:#e4e4e4"></div>
<div class="a" style="left:373px;top:207px;width:94px;text-align:right;font-size:12px;line-height:14px;color:#444;white-space:nowrap">状态：</div>
<div class="a" style="left:469px;top:207px;font-size:12px;line-height:14px;color:#333;white-space:nowrap">启用</div>
<div class="a" style="left:370px;top:227px;width:480px;height:1px;background:#e4e4e4"></div>
<div class="a" style="left:373px;top:235px;width:94px;text-align:right;font-size:12px;line-height:14px;color:#444;white-space:nowrap">版本：</div>
<div class="a" style="left:469px;top:235px;font-size:12px;line-height:14px;color:#333;white-space:nowrap">1.0</div>
<div class="a" style="left:370px;top:255px;width:480px;height:1px;background:#e4e4e4"></div>
<div class="a" style="left:373px;top:263px;width:94px;text-align:right;font-size:12px;line-height:14px;color:#444;white-space:nowrap">供应商：</div>
<div class="a" style="left:370px;top:283px;width:480px;height:1px;background:#e4e4e4"></div>
<div class="a" style="left:373px;top:291px;width:94px;text-align:right;font-size:12px;line-height:14px;color:#444;white-space:nowrap">作者：</div>
<div class="a" style="left:370px;top:311px;width:480px;height:1px;background:#e4e4e4"></div>
<div class="a" style="left:373px;top:319px;width:94px;text-align:right;font-size:12px;line-height:14px;color:#444;white-space:nowrap">备注：</div>
<div class="a" style="left:370px;top:365px;width:430px;height:24px;background:linear-gradient(90deg,rgba(255,255,255,0) 0%,rgba(255,255,255,0) 55%,#fff 100%),linear-gradient(180deg,#ffffff,#ececec);border-left:1px solid #e2e2e2;border-radius:3px 0 0 0"></div>
<div class="a" style="left:370px;top:388px;width:430px;height:1px;background:linear-gradient(90deg,#c4c4c4,#cccccc 55%,rgba(255,255,255,0))"></div>
<div class="a" style="left:370px;top:389px;width:430px;height:1px;background:linear-gradient(90deg,#ececec,#f0f0f0 55%,rgba(255,255,255,0))"></div>
<svg class="a" style="left:403px;top:388px" width="17" height="6" viewBox="0 0 17 6"><path d="M0 0L8.5 5L17 0Z" fill="#e4e4e4"/><path d="M2.5 0L8.5 3.6L14.5 0Z" fill="#f4f4f4"/></svg>
<div class="a" style="left:380px;top:369px;font-size:12px;font-weight:bold;line-height:14px;color:#333;letter-spacing:1px">依赖的插件</div>
<div class="a" style="left:370px;top:396px;width:480px;height:27px;background:linear-gradient(180deg,#fbfcfd,#e8edf3);border:1px solid #c8d4e2"></div>
<div class="a" style="left:418px;top:400px;width:1px;height:18px;background:#dde4ee"></div>
<div class="a" style="left:567px;top:400px;width:1px;height:18px;background:#dde4ee"></div>
<div class="a" style="left:708px;top:400px;width:1px;height:18px;background:#dde4ee"></div>
<div class="a" style="left:376px;top:403px;font-size:12px;line-height:14px;color:#1a58a4">序号</div>
<div class="a" style="left:423px;top:403px;font-size:12px;line-height:14px;color:#1a58a4">ID</div>
<div class="a" style="left:572px;top:403px;font-size:12px;line-height:14px;color:#1a58a4">名称</div>
<div class="a" style="left:713px;top:403px;font-size:12px;line-height:14px;color:#1a58a4">版本</div>
<div class="a" style="left:370px;top:445px;width:480px;height:1px;background:#e6e6e6"></div>
<div class="a" style="left:376px;top:427px;font-size:12px;line-height:14px;color:#333">1</div>
<div class="a" style="left:422px;top:427px;font-size:12px;line-height:14px;color:#333;white-space:nowrap;letter-spacing:.2px">com.zving.framework</div>
<div class="a" style="left:572px;top:427px;font-size:12px;line-height:14px;color:#333;white-space:nowrap;letter-spacing:.2px">Framework</div>
<div class="a" style="left:715px;top:427px;font-size:12px;line-height:14px;color:#333">2.0</div>
<div class="a" style="left:370px;top:470px;width:480px;height:1px;background:#e6e6e6"></div>
<div class="a" style="left:376px;top:452px;font-size:12px;line-height:14px;color:#333">2</div>
<div class="a" style="left:422px;top:452px;font-size:12px;line-height:14px;color:#333;white-space:nowrap;letter-spacing:.2px">com.zving.contentcore</div>
<div class="a" style="left:572px;top:452px;font-size:12px;line-height:14px;color:#333;white-space:nowrap">内容核心</div>
<div class="a" style="left:715px;top:452px;font-size:12px;line-height:14px;color:#333">1.0</div>
<div class="a" style="left:370px;top:495px;width:480px;height:1px;background:#e6e6e6"></div>
<div class="a" style="left:376px;top:477px;font-size:12px;line-height:14px;color:#333">3</div>
<div class="a" style="left:422px;top:477px;font-size:12px;line-height:14px;color:#333;white-space:nowrap;letter-spacing:.2px">com.zving.member</div>
<div class="a" style="left:572px;top:477px;font-size:12px;line-height:14px;color:#333;white-space:nowrap">会员</div>
<div class="a" style="left:715px;top:477px;font-size:12px;line-height:14px;color:#333">1.0</div>
<div class="a" style="left:370px;top:520px;width:480px;height:1px;background:#e6e6e6"></div>
<div class="a" style="left:376px;top:502px;font-size:12px;line-height:14px;color:#333">4</div>
<div class="a" style="left:422px;top:502px;font-size:12px;line-height:14px;color:#333;white-space:nowrap;letter-spacing:.2px">com.zving.platform</div>
<div class="a" style="left:572px;top:502px;font-size:12px;line-height:14px;color:#333;white-space:nowrap">基础平台</div>
<div class="a" style="left:715px;top:502px;font-size:12px;line-height:14px;color:#333">2.0</div>
<div class="a" style="left:370px;top:545px;width:480px;height:1px;background:#e6e6e6"></div>
<div class="a" style="left:376px;top:527px;font-size:12px;line-height:14px;color:#333">5</div>
<div class="a" style="left:422px;top:527px;font-size:12px;line-height:14px;color:#333;white-space:nowrap;letter-spacing:.2px">com.zving.staticize</div>
<div class="a" style="left:572px;top:527px;font-size:12px;line-height:14px;color:#333;white-space:nowrap">静态化支持</div>
<div class="a" style="left:715px;top:527px;font-size:12px;line-height:14px;color:#333">1.0</div>
<div class="a" style="left:370px;top:570px;width:480px;height:1px;background:#e6e6e6"></div>
<div class="a" style="left:376px;top:552px;font-size:12px;line-height:14px;color:#333">6</div>
<div class="a" style="left:422px;top:552px;font-size:12px;line-height:14px;color:#333;white-space:nowrap;letter-spacing:.2px">com.zving.article</div>
<div class="a" style="left:572px;top:552px;font-size:12px;line-height:14px;color:#333;white-space:nowrap">文章</div>
<div class="a" style="left:715px;top:552px;font-size:12px;line-height:14px;color:#333">1.0</div>
<div class="a" style="left:370px;top:595px;width:480px;height:1px;background:#e6e6e6"></div>
<div class="a" style="left:376px;top:577px;font-size:12px;line-height:14px;color:#333">7</div>
<div class="a" style="left:422px;top:577px;font-size:12px;line-height:14px;color:#333;white-space:nowrap;letter-spacing:.2px">com.zving.contentext...</div>
<div class="a" style="left:572px;top:577px;font-size:12px;line-height:14px;color:#333;white-space:nowrap">内容字段扩展</div>
<div class="a" style="left:715px;top:577px;font-size:12px;line-height:14px;color:#333">1.0</div>
<div class="a" style="left:370px;top:620px;width:480px;height:1px;background:#e6e6e6"></div>
<div class="a" style="left:376px;top:602px;font-size:12px;line-height:14px;color:#333">8</div>
<div class="a" style="left:422px;top:602px;font-size:12px;line-height:14px;color:#333;white-space:nowrap;letter-spacing:.2px">com.zving.membercon...</div>
<div class="a" style="left:572px;top:602px;font-size:12px;line-height:14px;color:#333;white-space:nowrap">会员投稿</div>
<div class="a" style="left:715px;top:602px;font-size:12px;line-height:14px;color:#333">1.0</div>
<div class="a" style="left:999px;top:96px;width:17px;height:538px;background:linear-gradient(90deg,#eeede6,#fbfbf6 60%,#f4f3ee)"></div>
<div class="a" style="left:1001px;top:98px;width:14px;height:14px;border-radius:2px;background:linear-gradient(135deg,#d4e0fc,#b8ccfa);box-shadow:0 1px 0 #fff,0 2px 0 #a4bce8"></div>
<svg class="a" style="left:1002px;top:101px" width="11" height="9" viewBox="0 0 11 9"><path d="M1.5 6.5L5.5 2.5L9.5 6.5" fill="none" stroke="#4d6185" stroke-width="2"/></svg>
<div class="a" style="left:1000px;top:114px;width:15px;height:431px;border-radius:2px;background:linear-gradient(90deg,#c8d6fc,#b8ccf8 60%,#a8c0f4);border:1px solid #fff;box-shadow:1px 0 0 #9ab4e8"></div>
<svg class="a" style="left:1003px;top:325px" width="9" height="8" viewBox="0 0 9 8"><path d="M1 .5H8M1 2.5H8M1 4.5H8M1 6.5H8" stroke="#f4f6ff" stroke-width="1"/><path d="M1 1.5H8M1 3.5H8M1 5.5H8M1 7.5H8" stroke="#7e9ad6" stroke-width="1"/></svg>
<div class="a" style="left:1001px;top:618px;width:14px;height:14px;border-radius:2px;background:linear-gradient(135deg,#d4e0fc,#b8ccfa);box-shadow:0 -1px 0 #fff,0 -2px 0 #a4bce8"></div>
<svg class="a" style="left:1002px;top:620px" width="11" height="9" viewBox="0 0 11 9"><path d="M1.5 2.5L5.5 6.5L9.5 2.5" fill="none" stroke="#4d6185" stroke-width="2"/></svg>
</body></html>
